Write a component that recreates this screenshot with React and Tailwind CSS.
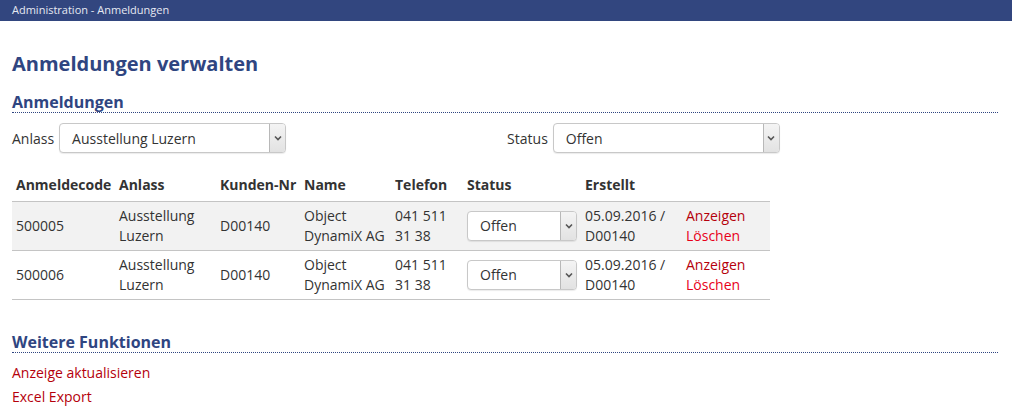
import React from 'react';

const font = { fontFamily: '"Open Sans", "Noto Sans", sans-serif' };

function Chevron() {
    return (
        <svg width="8" height="6" viewBox="0 0 8 6" className="text-[#555]">
            <path d="M1 1.5 L4 4.5 L7 1.5" fill="none" stroke="currentColor" strokeWidth="1.6" />
        </svg>
    );
}

function FakeSelect({ value, className }) {
    return (
        <div className={`flex items-stretch bg-white border border-[#c8c8c8] rounded-[4px] shadow-[0_1px_1px_rgba(0,0,0,0.08)] ${className}`}>
            <div className="flex-1 flex items-center pl-3 text-[14px] text-[#333]">{value}</div>
            <div className="w-[16px] flex items-center justify-center bg-gradient-to-b from-[#f4f4f4] to-[#e2e2e2] border-l border-[#b8b8b8] rounded-r-[3px]">
                <Chevron />
            </div>
        </div>
    );
}

const rows = [
    { code: '500005', shade: true },
    { code: '500006', shade: false },
];

export default function App() {
    return (
        <div style={font} className="bg-white min-h-[417px] text-[#333]">
            <div className="h-[21px] bg-[#32467f] flex items-center px-3 text-[11px] text-[#e6e9f2]">
                Administration - Anmeldungen
            </div>
            <div className="pl-3 pr-[14px]">
                <h1 className="mt-[29px] text-[20px] font-bold text-[#2f4581] leading-[28px]">Anmeldungen verwalten</h1>
                <h2 className="mt-[15px] text-[16px] font-bold text-[#2f4581] leading-[19px] border-b border-dotted border-[#2f4581]">
                    Anmeldungen
                </h2>

                <div className="mt-[10px] flex items-center text-[14px]">
                    <span className="mr-[5px]">Anlass</span>
                    <FakeSelect value="Ausstellung Luzern" className="w-[227px] h-[30px]" />
                    <span className="ml-[221px] mr-[5px]">Status</span>
                    <FakeSelect value="Offen" className="w-[227px] h-[30px]" />
                </div>

                <table className="mt-[22px] border-collapse text-[14px] leading-[20px]">
                    <thead>
                        <tr className="font-bold text-left">
                            <th className="w-[103px] pl-1 pb-[6px] font-bold">Anmeldecode</th>
                            <th className="w-[101px] pl-1 pb-[6px] font-bold">Anlass</th>
                            <th className="w-[84px] pl-1 pb-[6px] font-bold">Kunden-Nr</th>
                            <th className="w-[91px] pl-1 pb-[6px] font-bold">Name</th>
                            <th className="w-[72px] pl-1 pb-[6px] font-bold">Telefon</th>
                            <th className="w-[118px] pl-1 pb-[6px] font-bold">Status</th>
                            <th className="w-[101px] pl-1 pb-[6px] font-bold">Erstellt</th>
                            <th className="w-[88px] pl-1 pb-[6px] font-bold"></th>
                        </tr>
                    </thead>
                    <tbody>
                        {rows.map((r) => (
                            <tr key={r.code} className={`border-t border-b border-[#c4c4c4] ${r.shade ? 'bg-[#f2f2f2]' : 'bg-white'}`}>
                                <td className="pl-1 py-[4px] align-middle">{r.code}</td>
                                <td className="pl-1 py-[4px] align-middle">Ausstellung<br />Luzern</td>
                                <td className="pl-1 py-[4px] align-middle">D00140</td>
                                <td className="pl-1 py-[4px] align-middle">Object<br />DynamiX AG</td>
                                <td className="pl-1 py-[4px] align-middle">041 511<br />31 38</td>
                                <td className="pl-1 py-[4px] align-middle">
                                    <FakeSelect value="Offen" className="w-[110px] h-[30px]" />
                                </td>
                                <td className="pl-1 py-[4px] align-middle">05.09.2016 /<br />D00140</td>
                                <td className="pl-1 py-[4px] align-middle">
                                    <div className="text-[#b5000b]">Anzeigen</div>
                                    <div className="text-[#e8001a]">Löschen</div>
                                </td>
                            </tr>
                        ))}
                    </tbody>
                </table>

                <h2 className="mt-[33px] text-[16px] font-bold text-[#2f4581] leading-[19px] border-b border-dotted border-[#2f4581]">
                    Weitere Funktionen
                </h2>
                <div className="mt-[8px] text-[14px] leading-[24px] text-[#b5000b]">
                    <div>Anzeige aktualisieren</div>
                    <div>Excel Export</div>
                </div>
            </div>
        </div>
    );
}
